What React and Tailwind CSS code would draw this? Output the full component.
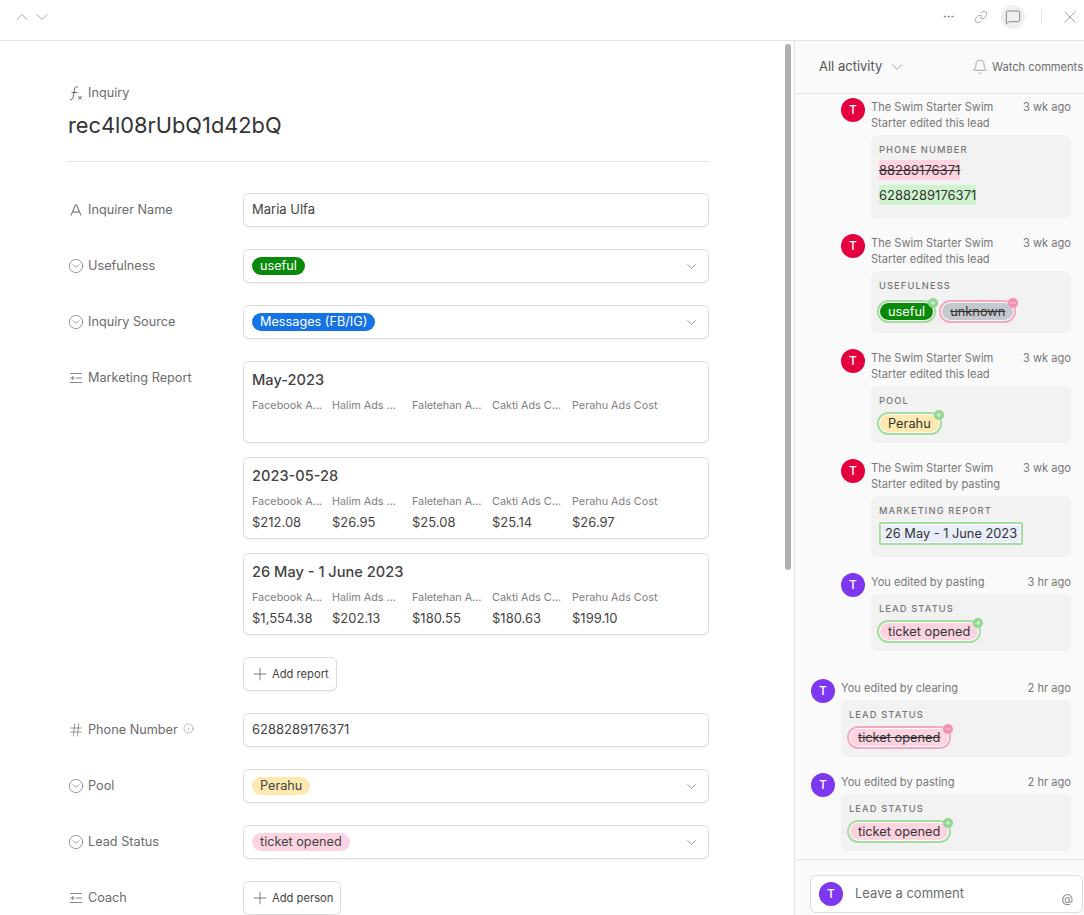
import React from "react";
import {
  Bell,
  ChevronDown,
  ChevronUp,
  CircleChevronDown,
  Hash,
  Info,
  Link,
  MessageSquare,
  Minus,
  MoreHorizontal,
  Plus,
  X,
} from "lucide-react";

const reports = [
  { title: "May-2023", values: ["", "", "", "", ""] },
  { title: "2023-05-28", values: ["$212.08", "$26.95", "$25.08", "$25.14", "$26.97"] },
  { title: "26 May - 1 June 2023", values: ["$1,554.38", "$202.13", "$180.55", "$180.63", "$199.10"] },
];

const reportColumns = ["Facebook A...", "Halim Ads ...", "Faletehan A...", "Cakti Ads C...", "Perahu Ads Cost"];

function FxIcon() {
  return (
    <svg width="16" height="16" viewBox="0 0 16 16" fill="none" stroke="#666" strokeWidth="1" className="shrink-0">
      <path d="M2 14.500c2 .5 2.800-.5 3.200-2.500l1.400-8C7 2.200 8 1.500 10 2M3.500 7.500h6" />
      <path d="M10.500 11l3.200 3.500M13.700 11l-3.200 3.500" strokeWidth="1" />
    </svg>
  );
}

function TextIcon() {
  return (
    <svg width="16" height="16" viewBox="0 0 16 16" fill="none" stroke="#777" strokeWidth="1.1" className="shrink-0">
      <path d="M3 13.500L7.300 3.200c.3-.6 1.100-.6 1.400 0L13 13.500M4.800 9.500c2 1 4.400 1 6.400 0" />
    </svg>
  );
}

function SlidersIcon() {
  return (
    <svg width="16" height="16" viewBox="0 0 16 16" fill="none" stroke="#888" strokeWidth="1.1" className="shrink-0">
      <path d="M2 3.500h12M8 8h6M2 12.500h12M2 8h3.500M4.200 6.400L5.800 8 4.200 9.600" />
    </svg>
  );
}

function FieldRow({ icon, label, children, info }) {
  return (
    <div className="flex items-start">
      <div className="flex h-[34px] w-[175px] shrink-0 items-center gap-[4px] text-[12.700px] text-[#6b6b6b]">
        {icon}
        <span>{label}</span>
        {info && <Info size={11} strokeWidth={1} className="-mt-[3px] ml-[1px] text-[#777]" />}
      </div>
      <div className="flex w-[466px] flex-col">{children}</div>
    </div>
  );
}

function TextBox({ children }) {
  return (
    <div className="flex h-[34px] items-center rounded-md border border-[#dcdcdc] bg-white px-2 text-[13px] text-[#444] shadow-[0_1px_1px_rgba(0,0,0,0.05)]">
      {children}
    </div>
  );
}

function SelectBox({ className, children }) {
  return (
    <div className="flex h-[34px] items-center justify-between rounded-md border border-[#dcdcdc] bg-white pl-2 pr-[9px] shadow-[0_1px_1px_rgba(0,0,0,0.05)]">
      <span className={`rounded-full px-2 text-[12.700px] leading-[18px] ${className}`}>{children}</span>
      <ChevronDown size={15} strokeWidth={1.1} className="text-[#666]" />
    </div>
  );
}

function AddButton({ children }) {
  return (
    <div className="flex h-[34px] w-fit items-center gap-[2px] rounded-md border border-[#dcdcdc] bg-white pl-[6px] pr-[7px] text-[11.200px] text-[#444] shadow-[0_1px_1px_rgba(0,0,0,0.05)]">
      <Plus size={20} strokeWidth={0.9} className="text-[#555]" />
      {children}
    </div>
  );
}

function ReportCard({ title, values }) {
  return (
    <div className="h-[82px] rounded-md border border-[#dcdcdc] bg-white px-2 pt-2 shadow-[0_1px_1px_rgba(0,0,0,0.05)]">
      <div className="text-[14.600px] font-medium leading-[20px] text-[#444]">{title}</div>
      <div className="mt-2 flex">
        {reportColumns.map((col, i) => (
          <div key={col} className={i === 4 ? "w-[100px]" : "w-[80px]"}>
            <div className="whitespace-nowrap text-[10.800px] leading-[16px] text-[#808080]">{col}</div>
            <div className="mt-[4px] h-[16px] text-[13px] leading-[16px] text-[#444]">{values[i]}</div>
          </div>
        ))}
      </div>
    </div>
  );
}

function Avatar({ color }) {
  return (
    <div className={`flex h-6 w-6 shrink-0 items-center justify-center rounded-full text-[12px] font-medium text-white ${color}`}>
      T
    </div>
  );
}

function DiffPill({ added, className, square, children }) {
  return (
    <div className={`relative w-fit border-2 bg-white p-[1px] ${square ? "rounded-[2px]" : "rounded-full"} ${added ? "border-[#a5dca0]" : "border-[#f5a8c0]"}`}>
      <div className={`text-[12.800px] leading-[17px] ${square ? "rounded-[1px] px-[3px]" : "rounded-full px-2"} ${className}`}>{children}</div>
      {!square && (
        <span className={`absolute -right-[4px] -top-[4px] flex h-[10px] w-[10px] items-center justify-center rounded-full text-white ${added ? "bg-[#8fd68f]" : "bg-[#f78fb0]"}`}>
          {added ? <Plus size={8} strokeWidth={2} /> : <Minus size={8} strokeWidth={2} />}
        </span>
      )}
    </div>
  );
}

function ActivityItem({ color, lines, time, label, indent, children }) {
  return (
    <div className={indent ? "pl-[46px]" : "pl-[16px]"}>
      <div className="flex gap-[6px]">
        <Avatar color={color} />
        <div className="min-w-0 flex-1 pt-px">
          <div className="flex justify-between text-[11.100px] leading-[16px] text-[#777]">
            <span>{lines[0]}</span>
            <span>{time}</span>
          </div>
          {lines[1] && <div className="text-[11.100px] leading-[16px] text-[#777]">{lines[1]}</div>}
          <div className="mt-[4px] rounded-md bg-[#f2f2f2] px-2 pb-2 pt-[9px]">
            <div className="text-[9.300px] font-medium uppercase leading-[12px] tracking-[0.12em] text-[#777]">{label}</div>
            {children}
          </div>
        </div>
      </div>
    </div>
  );
}

const RED = "bg-[#e4003f]";
const PURPLE = "bg-[#7c37ef]";
const SWIM = "The Swim Starter Swim";

export default function App() {
  return (
    <div className="flex h-screen flex-col overflow-hidden bg-white font-['Inter',sans-serif]">
      <header className="flex h-[41px] shrink-0 items-center justify-between border-b border-[#e5e5e5] pl-[12px] pr-[4px]">
        <div className="-mt-[7px] flex text-[#777]">
          <ChevronUp size={20} strokeWidth={0.8} />
          <ChevronDown size={20} strokeWidth={0.8} />
        </div>
        <div className="-mt-[7px] flex items-center text-[#777]">
          <MoreHorizontal size={13} strokeWidth={1.6} />
          <Link size={14} strokeWidth={1.1} className="ml-[19px]" />
          <div className="ml-[13px] flex h-6 w-6 items-center justify-center rounded-full bg-[#efefef]">
            <MessageSquare size={16} strokeWidth={1} className="text-[#555]" />
          </div>
          <div className="ml-[16px] h-[14px] w-px bg-[#e5e5e5]" />
          <X size={20} strokeWidth={0.8} className="ml-[18px]" />
        </div>
      </header>

      <div className="flex min-h-0 flex-1">
        <main className="relative w-[795px] shrink-0 overflow-hidden border-r border-[#e5e5e5] pl-[68px]">
          <div className="absolute right-[3px] top-[3px] h-[526px] w-[6px] rounded-full bg-[#b0b0b0]" />
          <div className="w-[641px]">
            <div className="mt-[44px] flex items-center gap-[4px] text-[12.700px] leading-[16px] text-[#6b6b6b]">
              <FxIcon />
              Inquiry
            </div>
            <h1 className="mt-2 text-[21.800px] font-normal leading-[32px] text-[#333]">rec4l08rUbQ1d42bQ</h1>
            <div className="mt-[20px] w-[640px] border-b border-[#e5e5e5]" />

            <div className="mt-[31px] flex flex-col gap-[22px]">
              <FieldRow icon={<TextIcon />} label="Inquirer Name">
                <TextBox>Maria Ulfa</TextBox>
              </FieldRow>
              <FieldRow icon={<CircleChevronDown size={16} strokeWidth={1} className="shrink-0" />} label="Usefulness">
                <SelectBox className="bg-[#0a8a0a] text-white">useful</SelectBox>
              </FieldRow>
              <FieldRow icon={<CircleChevronDown size={16} strokeWidth={1} className="shrink-0" />} label="Inquiry Source">
                <SelectBox className="bg-[#1673e6] text-white">Messages (FB/IG)</SelectBox>
              </FieldRow>
              <FieldRow icon={<SlidersIcon />} label="Marketing Report">
                <div className="flex flex-col gap-[14px]">
                  {reports.map((r) => (
                    <ReportCard key={r.title} title={r.title} values={r.values} />
                  ))}
                </div>
                <div className="mt-[22px]">
                  <AddButton>Add report</AddButton>
                </div>
              </FieldRow>
              <FieldRow icon={<Hash size={16} strokeWidth={1} className="shrink-0" />} label="Phone Number" info>
                <TextBox>6288289176371</TextBox>
              </FieldRow>
              <FieldRow icon={<CircleChevronDown size={16} strokeWidth={1} className="shrink-0" />} label="Pool">
                <SelectBox className="bg-[#fde9b0] text-[#444]">Perahu</SelectBox>
              </FieldRow>
              <FieldRow icon={<CircleChevronDown size={16} strokeWidth={1} className="shrink-0" />} label="Lead Status">
                <SelectBox className="bg-[#fcd3e0] text-[#444]">ticket opened</SelectBox>
              </FieldRow>
              <FieldRow icon={<SlidersIcon />} label="Coach">
                <AddButton>Add person</AddButton>
              </FieldRow>
            </div>
          </div>
        </main>

        <aside className="flex min-w-0 flex-1 flex-col bg-[#fafafa]">
          <div className="flex h-[53px] shrink-0 items-center justify-between whitespace-nowrap border-b border-[#e5e5e5] pl-[24px]">
            <div className="flex items-center gap-[6px] text-[13px] text-[#555]">
              All activity
              <ChevronDown size={18} strokeWidth={0.9} className="text-[#777]" />
            </div>
            <div className="flex items-center gap-[4px] pr-[1px] text-[11.100px] text-[#6b6b6b]">
              <Bell size={16} strokeWidth={0.9} />
              Watch comments
            </div>
          </div>

          <div className="min-h-0 flex-1 overflow-hidden pr-[13px] pt-[4px]">
            <div className="flex flex-col gap-[16px]">
              <ActivityItem indent color={RED} lines={[SWIM, "Starter edited this lead"]} time="3 wk ago" label="Phone number">
                <div className="mb-[5px] mt-[4px] flex flex-col items-start gap-[5px] text-[13px] leading-[20px] text-[#333]">
                  <div className="bg-[#ffd3df] line-through">88289176371</div>
                  <div className="bg-[#d0f3cf]">6288289176371</div>
                </div>
              </ActivityItem>
              <ActivityItem indent color={RED} lines={[SWIM, "Starter edited this lead"]} time="3 wk ago" label="Usefulness">
                <div className="-ml-[2px] mb-[2px] mt-[8px] flex gap-[3px]">
                  <DiffPill added className="bg-[#0a8a0a] text-white">useful</DiffPill>
                  <DiffPill className="bg-[#c4c8cf] text-[#333] line-through">unknown</DiffPill>
                </div>
              </ActivityItem>
              <ActivityItem indent color={RED} lines={[SWIM, "Starter edited this lead"]} time="3 wk ago" label="Pool">
                <div className="-ml-[2px] mt-[5px]">
                  <DiffPill added className="bg-[#fde9b0] text-[#333]">Perahu</DiffPill>
                </div>
              </ActivityItem>
              <ActivityItem indent color={RED} lines={[SWIM, "Starter edited by pasting"]} time="3 wk ago" label="Marketing report">
                <div className="mb-[4px] mt-[5px]">
                  <DiffPill added square className="bg-[#e8edf9] text-[#333]">26 May - 1 June 2023</DiffPill>
                </div>
              </ActivityItem>
              <ActivityItem indent color={PURPLE} lines={["You edited by pasting"]} time="3 hr ago" label="Lead status">
                <div className="-ml-[2px] mt-[5px]">
                  <DiffPill added className="bg-[#fcd3e0] text-[#333]">ticket opened</DiffPill>
                </div>
              </ActivityItem>
              <div className="mt-[12px]">
                <ActivityItem color={PURPLE} lines={["You edited by clearing"]} time="2 hr ago" label="Lead status">
                  <div className="-ml-[2px] mt-[5px]">
                    <DiffPill className="bg-[#fcd3e0] text-[#333] line-through">ticket opened</DiffPill>
                  </div>
                </ActivityItem>
              </div>
              <ActivityItem color={PURPLE} lines={["You edited by pasting"]} time="2 hr ago" label="Lead status">
                <div className="-ml-[2px] mt-[5px]">
                  <DiffPill added className="bg-[#fcd3e0] text-[#333]">ticket opened</DiffPill>
                </div>
              </ActivityItem>
            </div>
          </div>

          <div className="h-[56px] shrink-0 border-t border-[#e5e5e5] pl-[15px] pr-px pt-[15px]">
            <div className="flex h-[38px] items-center rounded-md border border-[#dcdcdc] bg-white pl-[8px] pr-[9px]">
              <Avatar color={PURPLE} />
              <span className="ml-[12px] flex-1 text-[13px] text-[#6b6b6b]">Leave a comment</span>
              <span className="mt-[10px] text-[12px] text-[#888]">@</span>
            </div>
          </div>
        </aside>
      </div>
    </div>
  );
}
